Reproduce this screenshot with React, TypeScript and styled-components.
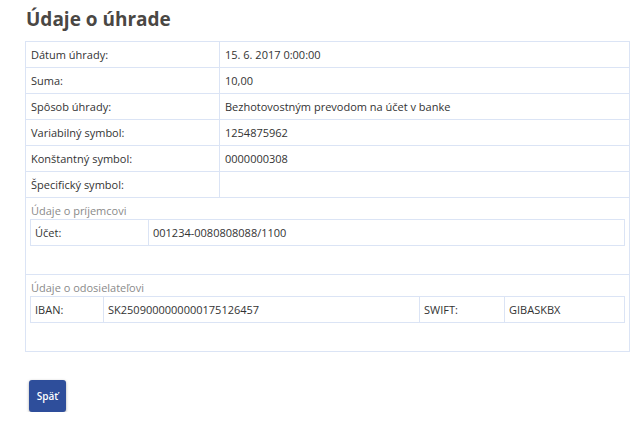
import React from "react";
import styled, { createGlobalStyle } from "styled-components";

const Global = createGlobalStyle`
  html, body { margin: 0; padding: 0; background: #fff; }
  body { font-family: "Open Sans", "Liberation Sans", sans-serif; color: #333; }
`;

const BORDER = "#dbe4f5";

const Page = styled.div`
  padding: 6px 12px 0 25px;
  width: 605px;
`;

const Title = styled.h1`
  margin: 0 0 8px 1px;
  font-size: 19px;
  line-height: 27px;
  font-weight: 700;
  color: #4a4744;
`;

const Outer = styled.div`
  border: 1px solid ${BORDER};
`;

const Row = styled.div`
  display: grid;
  grid-template-columns: 193px 1fr;
  height: 25px;
  border-bottom: 1px solid ${BORDER};
`;

const Cell = styled.div<{ $first?: boolean }>`
  display: flex;
  align-items: center;
  padding: 0 5px;
  font-size: 11px;
  color: #333;
  white-space: nowrap;
  border-left: ${(p) => (p.$first ? "none" : `1px solid ${BORDER}`)};
`;

const Section = styled.div<{ $last?: boolean }>`
  padding: 4px 4px 0 4px;
  height: 72px;
  border-bottom: ${(p) => (p.$last ? "none" : `1px solid ${BORDER}`)};
`;

const SectionLabel = styled.div`
  font-size: 11px;
  line-height: 17px;
  color: #8a8a8a;
  padding-left: 1px;
`;

const Inner = styled.div<{ $cols: string }>`
  display: grid;
  grid-template-columns: ${(p) => p.$cols};
  height: 25px;
  border: 1px solid ${BORDER};
`;

const InnerCell = styled(Cell)`
  padding: 0 5px 0 4px;
`;

const Button = styled.button`
  margin: 28px 0 0 4px;
  width: 37px;
  height: 32px;
  border: none;
  border-radius: 3px;
  background: #2e4e9b;
  color: #fff;
  font-family: "Open Sans", "Liberation Sans", sans-serif;
  font-size: 10px;
  font-weight: 600;
  padding: 0;
  box-shadow: 0 1px 3px rgba(0, 0, 0, 0.35);
  cursor: pointer;
`;

const rows: [string, string][] = [
  ["Dátum úhrady:", "15. 6. 2017 0:00:00"],
  ["Suma:", "10,00"],
  ["Spôsob úhrady:", "Bezhotovostným prevodom na účet v banke"],
  ["Variabilný symbol:", "1254875962"],
  ["Konštantný symbol:", "0000000308"],
  ["Špecifický symbol:", ""],
];

export default function App() {
  return (
    <>
      <Global />
      <Page>
        <Title>Údaje o úhrade</Title>
        <Outer>
          {rows.map(([k, v]) => (
            <Row key={k}>
              <Cell $first>{k}</Cell>
              <Cell>{v}</Cell>
            </Row>
          ))}
          <Section>
            <SectionLabel>Údaje o príjemcovi</SectionLabel>
            <Inner $cols="117px 1fr">
              <InnerCell $first>Účet:</InnerCell>
              <InnerCell>001234-0080808088/1100</InnerCell>
            </Inner>
          </Section>
          <Section $last>
            <SectionLabel>Údaje o odosielateľovi</SectionLabel>
            <Inner $cols="72px 316px 85px 1fr">
              <InnerCell $first>IBAN:</InnerCell>
              <InnerCell>SK2509000000000175126457</InnerCell>
              <InnerCell>SWIFT:</InnerCell>
              <InnerCell>GIBASKBX</InnerCell>
            </Inner>
          </Section>
        </Outer>
        <Button>Späť</Button>
      </Page>
    </>
  );
}
